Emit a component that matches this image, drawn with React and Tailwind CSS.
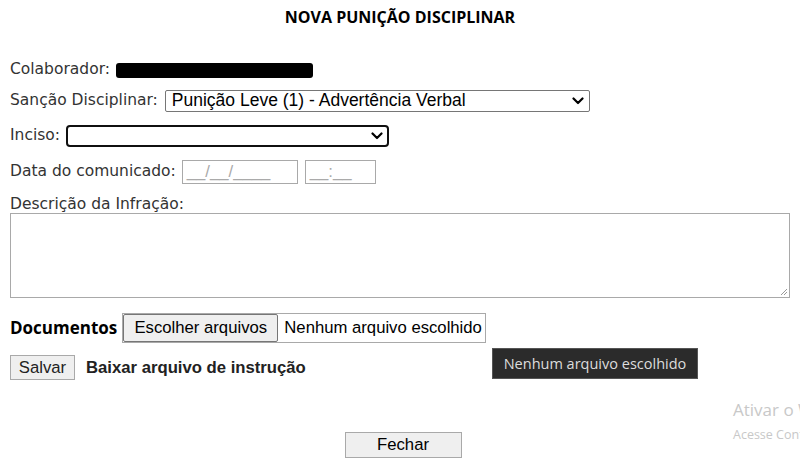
import React from "react";

const lbl = { fontFamily: "'DejaVu Sans', Verdana, sans-serif" };
const arial = { fontFamily: "'Liberation Sans', Arial, sans-serif" };

function Chevron() {
  return (
    <svg width="12" height="8" viewBox="0 0 12 8" className="shrink-0">
      <path d="M1.5 1.5 L6 6 L10.5 1.5" fill="none" stroke="#000" strokeWidth="2.2" strokeLinecap="round" strokeLinejoin="round" />
    </svg>
  );
}

export default function App() {
  return (
    <div className="relative w-[800px] h-[463px] bg-white overflow-hidden text-[#222]">
      <div className="flex justify-center pt-[5px] h-[44px]">
        <span className="text-[16px] font-bold text-black" style={{ fontFamily: "'Open Sans', sans-serif" }}>
          NOVA PUNIÇÃO DISCIPLINAR
        </span>
      </div>

      <div className="px-[10px] pt-[15px] flex flex-col">
        <div className="flex items-center h-[22px] gap-[6px]">
          <span className="text-[15.5px] text-[#333]" style={lbl}>Colaborador:</span>
          <div className="w-[197px] h-[15px] bg-black rounded-[3px]" />
        </div>

        <div className="flex items-center h-[22px] mt-[9px] gap-[7px]">
          <span className="text-[15.5px] text-[#333]" style={lbl}>Sanção Disciplinar:</span>
          <div className="flex items-center justify-between w-[425px] h-[22px] border border-[#767676] rounded-[2px] pl-[6px] pr-[5px]">
            <span className="text-[17.5px] text-black leading-none" style={arial}>
              Punição Leve (1) - Advertência Verbal
            </span>
            <Chevron />
          </div>
        </div>

        <div className="flex items-center h-[22px] mt-[13px] gap-[6px]">
          <span className="text-[15.5px] text-[#333]" style={lbl}>Inciso:</span>
          <div className="flex items-center justify-end w-[323px] h-[22px] border-2 border-[#101010] rounded-[4px] pr-[4px]">
            <Chevron />
          </div>
        </div>

        <div className="flex items-center h-[24px] mt-[13px] gap-[6px]">
          <span className="text-[15.5px] text-[#333]" style={lbl}>Data do comunicado:</span>
          <div className="flex items-center w-[116px] h-[24px] border border-[#a9a9a9] px-[4px]">
            <span className="text-[16.7px] text-[#aaa]" style={arial}>__/__/____</span>
          </div>
          <div className="flex items-center w-[71px] h-[24px] border border-[#a9a9a9] px-[4px] ml-[1px]">
            <span className="text-[16.7px] text-[#aaa]" style={arial}>__:__</span>
          </div>
        </div>

        <div className="h-[17px] mt-[12px] flex items-center">
          <span className="text-[15.5px] text-[#333]" style={lbl}>Descrição da Infração:</span>
        </div>
        <div className="relative w-[780px] h-[85px] border border-[#a9a9a9]">
          <svg className="absolute right-[1px] bottom-[1px]" width="9" height="9" viewBox="0 0 9 9">
            <path d="M8 2 L2 8 M8 5 L5 8" stroke="#999" strokeWidth="1" />
          </svg>
        </div>

        <div className="flex items-center h-[30px] mt-[15px] gap-[5px]">
          <span className="text-[17px] font-bold text-black" style={{ fontFamily: "'Open Sans', sans-serif" }}>Documentos</span>
          <div className="flex items-center h-[30px] w-[364px] border border-[#a9a9a9]">
            <div className="flex items-center justify-center h-[28px] w-[155px] bg-[#efefef] border border-[#767676] rounded-[2px]">
              <span className="text-[16.7px] text-black" style={arial}>Escolher arquivos</span>
            </div>
            <span className="text-[16.7px] text-black ml-[6px]" style={arial}>Nenhum arquivo escolhido</span>
          </div>
        </div>

        <div className="flex items-center h-[25px] mt-[12px]">
          <div className="flex items-center justify-center w-[65px] h-[25px] bg-[#efefef] border border-[#a9a9a9]">
            <span className="text-[16.7px] text-[#222]" style={arial}>Salvar</span>
          </div>
          <span className="text-[16.7px] font-bold text-[#222] ml-[11px]" style={arial}>Baixar arquivo de instrução</span>
        </div>

        <div className="flex justify-center h-[26px] mt-[52px]">
          <div className="flex items-center justify-center w-[117px] h-[26px] bg-[#efefef] border border-[#a9a9a9] ml-[6px]">
            <span className="text-[16.7px] text-black" style={arial}>Fechar</span>
          </div>
        </div>
      </div>

      <div className="absolute left-[492px] top-[348px] w-[206px] h-[31px] bg-[#2b2b2b] border border-[#555] flex items-center justify-center">
        <span className="text-[14.5px] text-[#ddd]" style={{ fontFamily: "'Open Sans', sans-serif" }}>Nenhum arquivo escolhido</span>
      </div>

      <div className="absolute left-[733px] top-[399px] flex flex-col whitespace-nowrap" style={{ fontFamily: "'Open Sans', sans-serif" }}>
        <span className="text-[17px] leading-[22px] text-[#c8c8c8]">Ativar o Windows</span>
        <span className="text-[12.5px] leading-[18px] text-[#c8c8c8] mt-[5px]">Acesse Configurações</span>
      </div>
    </div>
  );
}
